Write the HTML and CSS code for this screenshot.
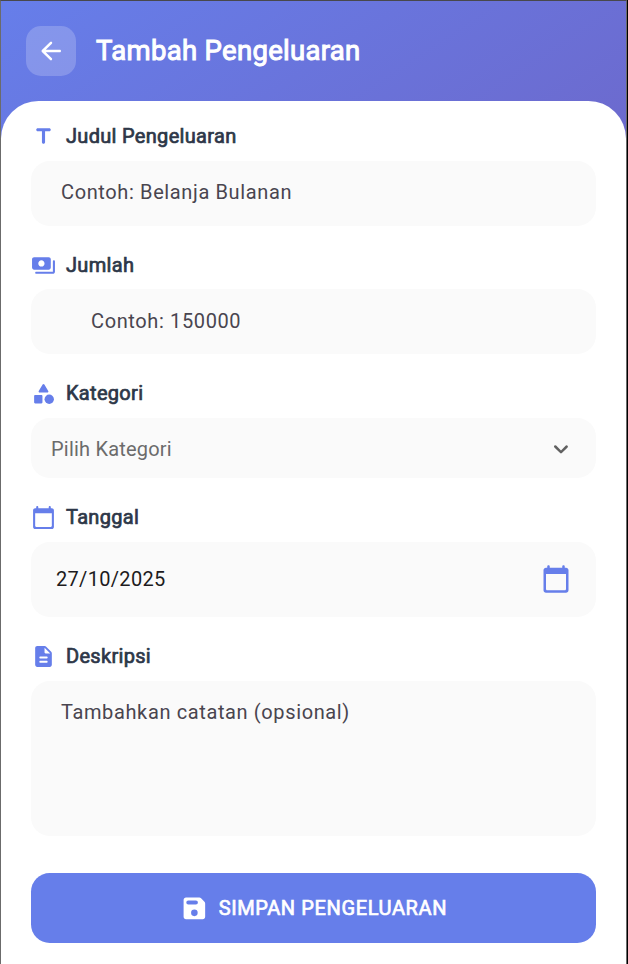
FILE: index.html
```html
<!DOCTYPE html>
<html lang="id">
<head>
<meta charset="utf-8">
<title>Tambah Pengeluaran</title>
<link rel="stylesheet" href="styles.css">
</head>
<body>
<div class="app">
  <header class="header">
    <button class="back" aria-label="Kembali">
      <svg class="icon" viewBox="0 0 24 24"><path d="M19 11H7.830l4.880-4.880c.39-.39.39-1.030 0-1.420a1 1 0 0 0-1.410 0l-6.590 6.590a1 1 0 0 0 0 1.410l6.590 6.590a1 1 0 0 0 1.410-1.410L7.830 13H19c.55 0 1-.45 1-1s-.45-1-1-1z"/></svg>
    </button>
    <h1 class="title">Tambah Pengeluaran</h1>
  </header>
  <main class="sheet">
    <section class="group">
      <div class="label">
        <svg class="icon" viewBox="0 0 24 24"><path d="M5 5.500C5 6.330 5.670 7 6.500 7h4v10.500c0 .83.67 1.500 1.500 1.500s1.500-.67 1.500-1.500V7h4c.83 0 1.500-.67 1.500-1.500S18.330 4 17.500 4h-11C5.670 4 5 4.670 5 5.500z"/></svg>
        <span class="label-text">Judul Pengeluaran</span>
      </div>
      <div class="field"><span class="hint">Contoh: Belanja Bulanan</span></div>
    </section>
    <section class="group">
      <div class="label">
        <svg class="icon" viewBox="0 0 24 24"><path d="M19 14V6c0-1.100-.9-2-2-2H3c-1.100 0-2 .9-2 2v8c0 1.100.9 2 2 2h14c1.100 0 2-.9 2-2zm-9-1c-1.660 0-3-1.340-3-3s1.340-3 3-3 3 1.340 3 3-1.340 3-3 3zm13-5v10c0 1.100-.9 2-2 2H5c-.55 0-1-.45-1-1s.45-1 1-1h16V8c0-.55.45-1 1-1s1 .45 1 1z"/></svg>
        <span class="label-text">Jumlah</span>
      </div>
      <div class="field field-amount"><span class="hint">Contoh: 150000</span></div>
    </section>
    <section class="group">
      <div class="label">
        <svg class="icon" viewBox="0 0 24 24"><path d="M11.150 3.400 7.430 9.480c-.41.66.07 1.520.85 1.520h7.430c.78 0 1.260-.86.85-1.520L12.850 3.400c-.39-.64-1.310-.64-1.700 0z"/><circle cx="17.500" cy="17.500" r="4.500"/><path d="M4 21.500h6c.55 0 1-.45 1-1v-6c0-.55-.45-1-1-1H4c-.55 0-1 .45-1 1v6c0 .55.450 1 1 1z"/></svg>
        <span class="label-text">Kategori</span>
      </div>
      <div class="field field-select">
        <span class="placeholder">Pilih Kategori</span>
        <svg class="chevron" viewBox="0 0 24 24"><path d="M8.120 9.290 12 13.170l3.880-3.880a1 1 0 0 1 1.410 1.410l-4.590 4.590a1 1 0 0 1-1.410 0L6.700 10.700a1 1 0 0 1 1.420-1.410z"/></svg>
      </div>
    </section>
    <section class="group">
      <div class="label">
        <svg class="icon" viewBox="0 0 24 24"><path d="M20 3h-1V2c0-.55-.45-1-1-1s-1 .45-1 1v1H7V2c0-.55-.45-1-1-1s-1 .45-1 1v1H4c-1.100 0-2 .9-2 2v16c0 1.100.9 2 2 2h16c1.100 0 2-.9 2-2V5c0-1.100-.9-2-2-2zm-1 18H5c-.55 0-1-.45-1-1V8h16v12c0 .55-.45 1-1 1z"/></svg>
        <span class="label-text">Tanggal</span>
      </div>
      <div class="field field-date">
        <span class="value">27/10/2025</span>
        <svg class="calendar" viewBox="0 0 24 24"><path d="M20 3h-1V2c0-.55-.45-1-1-1s-1 .45-1 1v1H7V2c0-.55-.45-1-1-1s-1 .45-1 1v1H4c-1.100 0-2 .9-2 2v16c0 1.100.9 2 2 2h16c1.100 0 2-.9 2-2V5c0-1.100-.9-2-2-2zm-1 18H5c-.55 0-1-.45-1-1V8h16v12c0 .55-.45 1-1 1z"/></svg>
      </div>
    </section>
    <section class="group">
      <div class="label">
        <svg class="icon" viewBox="0 0 24 24"><path d="M14.590 2.590c-.38-.38-.89-.59-1.420-.59H6c-1.100 0-2 .9-2 2v16c0 1.100.89 2 1.990 2H18c1.100 0 2-.9 2-2V8.830c0-.53-.21-1.040-.59-1.410l-4.820-4.830zM15 18H9c-.55 0-1-.45-1-1s.45-1 1-1h6c.55 0 1 .45 1 1s-.45 1-1 1zm0-4H9c-.55 0-1-.45-1-1s.45-1 1-1h6c.55 0 1 .45 1 1s-.45 1-1 1zm-2-6V3.500L18.500 9H14c-.55 0-1-.45-1-1z"/></svg>
        <span class="label-text">Deskripsi</span>
      </div>
      <div class="field field-notes"><span class="hint">Tambahkan catatan (opsional)</span></div>
    </section>
    <button class="submit">
      <svg class="save" viewBox="0 0 24 24"><path fill-rule="evenodd" d="M17.590 3.590c-.38-.38-.89-.59-1.420-.59H5c-1.110 0-2 .9-2 2v14c0 1.100.9 2 2 2h14c1.100 0 2-.9 2-2V7.830c0-.53-.21-1.040-.59-1.410l-2.820-2.830zM12 18.500a2.750 2.750 0 1 1 0-5.500 2.750 2.750 0 0 1 0 5.500zM13.300 8.700H6.900a1.650 1.650 0 0 1 0-3.300h6.400a1.650 1.650 0 0 1 0 3.300z"/></svg>
      <span class="submit-text">SIMPAN PENGELUARAN</span>
    </button>
  </main>
</div>
</body>
</html>
```
FILE: styles.css
```css
* { box-sizing: border-box; }

body {
  margin: 0;
  height: 964px;
  overflow: hidden;
  background: #000;
  font-family: Roboto, "Liberation Sans", sans-serif;
}

.app {
  width: 627px;
  height: 964px;
  border: solid #6b6b6b;
  border-width: 1px 1px 0;
  border-top-color: #48484c;
  background: linear-gradient(147deg, #667eea, #764ba2) padding-box;
  display: flex;
  flex-direction: column;
}

.header {
  height: 100px;
  padding: 0 25px;
  display: flex;
  align-items: center;
  gap: 20px;
  flex: none;
}

button { border: 0; padding: 0; font: inherit; }

.back {
  width: 50px;
  height: 50px;
  border-radius: 15px;
  background: rgba(255, 255, 255, .2);
  display: grid;
  place-items: center;
}

.icon {
  width: 25px;
  height: 25px;
  fill: #667eea;
  flex: none;
}

.back .icon {
  width: 30px;
  height: 30px;
  fill: #fff;
}

.title {
  margin: 0;
  color: #fff;
  font-size: 27.5px;
  font-weight: 400;
  line-height: 36px;
  letter-spacing: .31px;
  white-space: nowrap;
  -webkit-text-stroke: 1px #fff;
}

.sheet {
  flex: 1;
  padding: 22.85px 30px 0;
  background: #fff;
  border-radius: 37.5px 37.5px 0 0;
}

.group { margin-bottom: 27px; }

.label {
  height: 25px;
  margin-bottom: 11.75px;
  display: flex;
  align-items: center;
  gap: 10px;
}

.label-text {
  color: #2d3748;
  font-size: 20px;
  line-height: 25px;
  letter-spacing: .31px;
  -webkit-text-stroke: .7px #2d3748;
}

.field {
  height: 65px;
  padding: 0 30px 2px;
  border-radius: 18.75px;
  background: #fafafa;
  display: flex;
  align-items: center;
  font-size: 20px;
  line-height: 30px;
  letter-spacing: .625px;
}

.hint { color: #49454f; }

.field-amount { padding-left: 60px; }

.field-select {
  height: 60px;
  padding: 1px 20px 0;
  justify-content: space-between;
  letter-spacing: .2px;
}

.placeholder { color: #6b6b6b; }

.chevron { width: 30px; height: 30px; fill: #616161; }

.field-date {
  height: 75px;
  padding: 0 25px;
  justify-content: space-between;
  letter-spacing: .31px;
}

.value { color: #1d1b20; }

.calendar { width: 30px; height: 30px; fill: #667eea; }

.field-notes {
  height: 155px;
  padding-top: 16px;
  align-items: flex-start;
}

.submit {
  width: 100%;
  height: 70px;
  margin-top: 37.5px;
  border-radius: 18.75px;
  background: #667eea;
  color: #fff;
  display: flex;
  align-items: center;
  justify-content: center;
  gap: 10px;
}

.save { width: 28.75px; height: 28.75px; fill: #fff; }

.submit-text {
  font-size: 20px;
  line-height: 30px;
  letter-spacing: .625px;
  -webkit-text-stroke: .7px #fff;
}
```
